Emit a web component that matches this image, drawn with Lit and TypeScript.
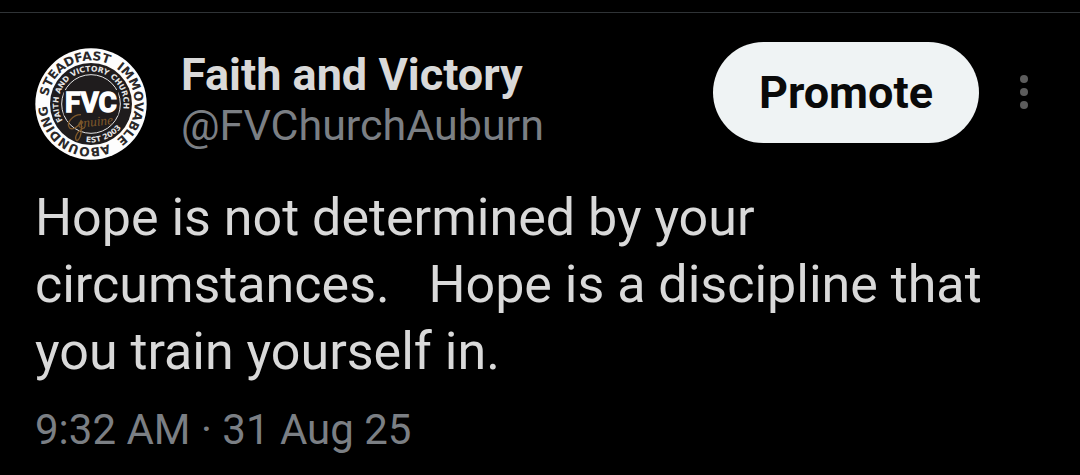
import { html, css, svg, LitElement } from 'lit';
import { customElement, property } from 'lit/decorators.js';

@customElement('church-seal')
export class ChurchSeal extends LitElement {
    static styles = css`
        :host {
            display: block;
            width: 112px;
            height: 112px;
        }
        .seal {
            display: block;
            width: 100%;
            height: 100%;
            font-family: 'DejaVu Sans', sans-serif;
            font-weight: 700;
            text-anchor: middle;
        }
        .outer {
            font-size: 37px;
            fill: #2a2829;
        }
        .inner {
            font-size: 23px;
            fill: #e6e6e6;
        }
        .initials {
            font-family: Roboto, sans-serif;
            font-size: 84px;
            fill: #ffffff;
            stroke: #ffffff;
            stroke-width: 4px;
        }
        .script {
            font-family: 'Liberation Serif', serif;
            font-size: 40px;
            font-style: italic;
            font-weight: 400;
            fill: #80592a;
        }
    `;

    // word on the white rim, centred on the given clockwise angle
    rimWord(word: string, angle: number) {
        return svg`
            <text class="outer" transform="rotate(${angle} 168 168)">
                <textPath href="#rim" startOffset="50%">${word}</textPath>
            </text>
        `;
    }

    render() {
        return html`
            <svg class="seal" viewBox="0 0 336 336" role="img" aria-label="Faith and Victory Church">
                <defs>
                    <path id="rim" d="M37 168A131 131 0 0 1 299 168" />
                    <path id="ring" d="M168 266A98 98 0 0 1 168 70A98 98 0 0 1 168 266" />
                    <path id="ring-base" d="M53 168A115 115 0 0 0 283 168" />
                </defs>
                <circle cx="168" cy="168" r="167" fill="#fdfdfd" />
                <circle cx="168" cy="168" r="123" fill="#1f1c1d" />
                <circle cx="168" cy="168" r="88" fill="none" stroke="#e4e4e4" stroke-width="3" />
                ${this.rimWord('STEADFAST', -28)}
                ${this.rimWord('IMMOVABLE', 90)}
                ${this.rimWord('ABOUNDING', 212)}
                <text class="inner" transform="rotate(-11 168 168)">
                    <textPath href="#ring" startOffset="50%">FAITH AND VICTORY CHURCH</textPath>
                </text>
                <rect x="86" y="126" width="164" height="76" fill="#1f1c1d" />
                <text class="script" x="182" y="234" transform="rotate(-6 182 234)">enuine</text>
                <path d="M138 200C112 200 92 226 104 240C116 250 140 226 138 216C142 244 138 272 126 278C116 274 124 248 150 238" fill="none" stroke="#80592a" stroke-width="4" />
                <text class="inner" transform="rotate(-22 168 168)">
                    <textPath href="#ring-base" startOffset="50%">EST 2003</textPath>
                </text>
                <text class="initials" x="168" y="192">FVC</text>
            </svg>
        `;
    }
}

@customElement('post-header')
export class PostHeader extends LitElement {
    @property({ type: String }) name = '';
    @property({ type: String }) handle = '';

    static styles = css`
        .header {
            display: flex;
            align-items: flex-start;
        }
        .avatar {
            flex: none;
            margin-top: 6px;
            border-radius: 50%;
        }
        .author {
            flex: 1;
            min-width: 0;
            margin: 8px 0 0 34px;
            font-size: 43px;
            line-height: 50px;
            white-space: nowrap;
        }
        .name {
            font-size: 45px;
            font-weight: 700;
            color: #d9d9d9;
        }
        .handle {
            color: #7b7f84;
        }
        .name,
        .handle {
            display: block;
            text-decoration: none;
        }
        button {
            flex: none;
            border: none;
            font-family: inherit;
            cursor: pointer;
        }
        .promote {
            height: 101px;
            padding: 0 46px;
            border-radius: 51px;
            background: #eff3f4;
            color: #0a0a0a;
            font-size: 45px;
            font-weight: 700;
        }
        .more {
            width: 90px;
            height: 100px;
            padding: 0;
            background: none;
        }
        .more svg {
            display: block;
            width: 8px;
            height: 34px;
            margin: 0 auto;
            fill: #5c5c5c;
        }
    `;

    render() {
        return html`
            <header class="header">
                <church-seal class="avatar"></church-seal>
                <div class="author">
                    <a class="name" href="#profile">${this.name}</a>
                    <a class="handle" href="#profile">${this.handle}</a>
                </div>
                <button class="promote" type="button">Promote</button>
                <button class="more" type="button" aria-label="More options">
                    <svg viewBox="0 0 8 34">
                        <circle cx="4" cy="4" r="4" />
                        <circle cx="4" cy="17" r="4" />
                        <circle cx="4" cy="30" r="4" />
                    </svg>
                </button>
            </header>
        `;
    }
}

@customElement('app-root')
export class AppRoot extends LitElement {
    static styles = css`
        :host {
            display: block;
            min-height: 100vh;
            box-sizing: border-box;
            padding-top: 12px;
            background: #000000;
            font-family: Roboto, 'Liberation Sans', sans-serif;
        }
        .post {
            border-top: 1px solid #2f3336;
            padding: 29px 11px 0 35px;
        }
        .text {
            margin: 24px 44px 0 0;
            color: #d9d9d9;
            font-size: 52px;
            line-height: 67px;
            white-space: pre-wrap;
        }
        .time {
            display: block;
            margin-top: 20px;
            color: #7b7f84;
            font-size: 42px;
            line-height: 50px;
        }
    `;

    render() {
        return html`
            <article class="post">
                <post-header name="Faith and Victory" handle="@FVChurchAuburn"></post-header>
                <p class="text">Hope is not determined by your circumstances.   Hope is a discipline that you train yourself in.</p>
                <time class="time" datetime="2025-08-31T09:32">9:32 AM · 31 Aug 25</time>
            </article>
        `;
    }
}
